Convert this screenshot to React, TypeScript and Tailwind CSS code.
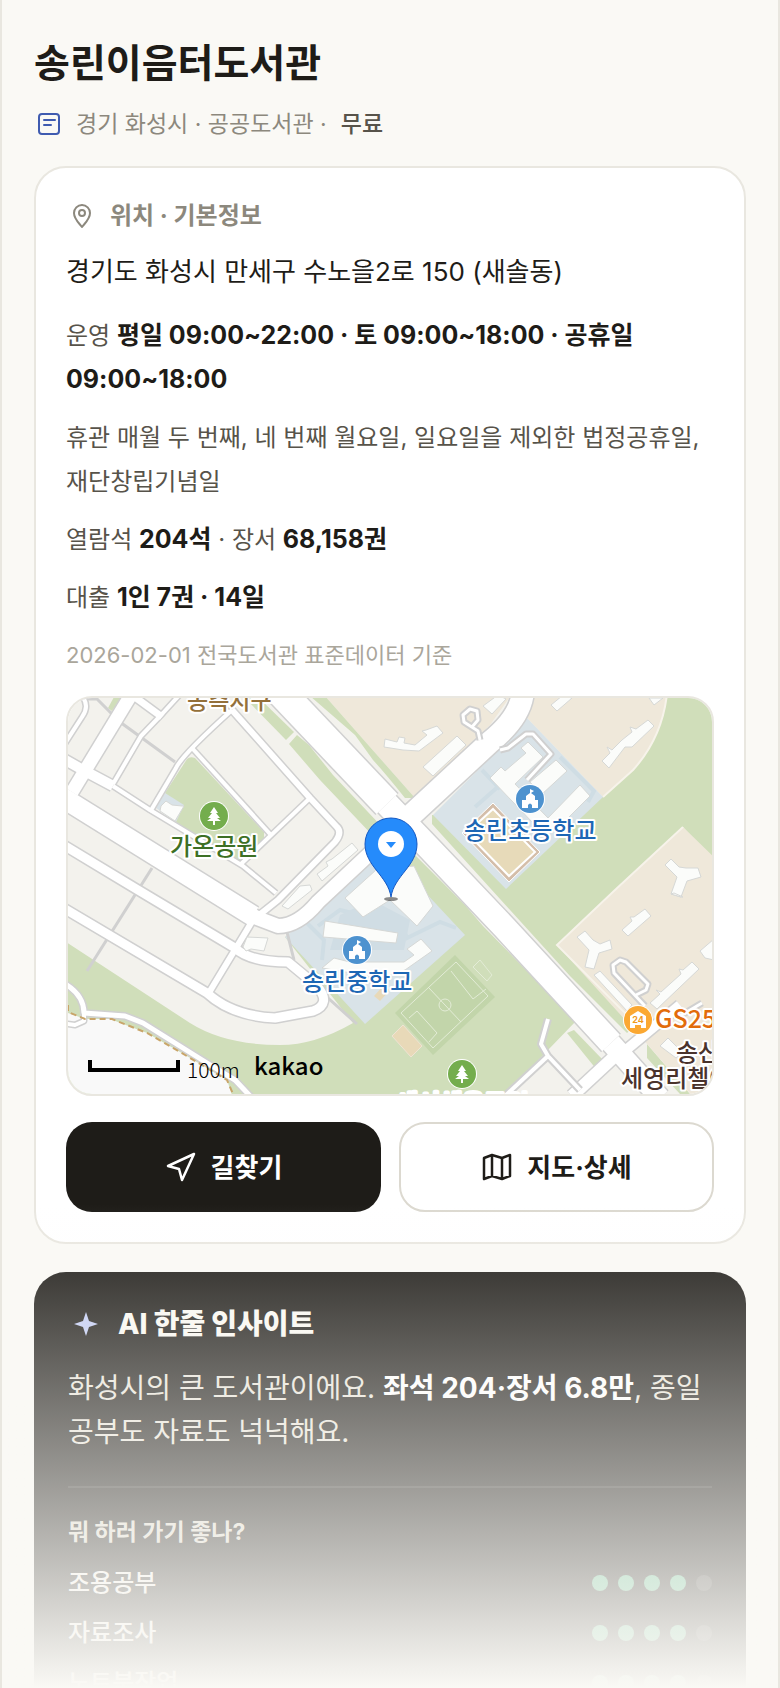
import type { ReactNode } from "react";

type Road = { d: string; w: number };

const roads: Road[] = [
  // boulevard
  { d: "M275 686L387 804", w: 29 },
  { d: "M387 804L431 850L505 928L611 1043", w: 24 },
  { d: "M611 1043L660 1098", w: 20 },
  // cross street
  { d: "M408 818L490 742Q522 716 523 690", w: 22 },
  { d: "M415 812L365 858L318 902Q298 926 278 926L257 918L205 887L60 796", w: 14 },
  { d: "M253 916L60 796", w: 20 },
  { d: "M620 1055L680 1005", w: 10 },
  { d: "M615 1056L572 1096", w: 12 },
  // west grid
  { d: "M60 843L138 890L235 948Q250 962 288 962L317 986Q332 1004 313 1011L275 1018Q232 1016 207 993L60 906", w: 9 },
  { d: "M210 991L253 920L278 900L335 842Q343 832 336 826L310 798L232 710", w: 6 },
  { d: "M60 757L83 770L113 786", w: 10 },
  { d: "M113 786L150 810L243 866L276 893", w: 4 },
  { d: "M72 792L134 690", w: 13 },
  { d: "M113 784L141 736L163 713L184 690", w: 4 },
  { d: "M128 692L162 717", w: 7 },
  { d: "M150 812L176 768Q182 755 232 710", w: 4 },
  { d: "M192 748L270 834", w: 4 },
  { d: "M241 864L310 798", w: 4 },
  { d: "M228 712L210 692", w: 4 },
  { d: "M82 696Q90 706 82 717L62 748", w: 4 },
  // trails
  { d: "M62 982Q84 994 84 1013L125 1016L143 1023L207 1063L235 1080L252 1098", w: 5 },
  { d: "M84 1012L84 1021L75 1025L62 1023", w: 4 },
];

const alleys: Road[] = [
  { d: "M480 740L478 731L464 722L463 715L470 709L477 711L478 720L472 727", w: 3 },
  { d: "M500 750L508 748L526 734L533 734L551 754L527 780", w: 3 },
  { d: "M645 1006L614 973L613 965L620 960L626 962L648 984L646 990L636 995", w: 3 },
  { d: "M548 1019L541 1044L548 1056L580 1090", w: 4 },
  { d: "M548 1056L505 1096", w: 4 },
  { d: "M680 1016L702 1003", w: 3 },
];

const buildings = [
  "385,739 397,742 399,737 405,738 404,743 415,745 427,735 422,731 426,730 437,726 443,733 419,751 403,750 384,747",
  "457,736 466,745 433,776 423,767",
  "483,706 498,695 506,699 492,714",
  "551,705 562,696 572,698 557,711",
  "649,698 663,698 654,705",
  "602,761 610,753 607,747 612,750 622,740 632,732 630,727 636,729 648,720 654,726 632,747 625,747 609,768",
  "490,778 501,767 505,771 526,753 521,748 528,742 543,757 515,784 548,818 580,785 590,796 556,830 534,824",
  "530,782 556,760 567,771 541,795",
  "665,865 671,859 679,867 686,868 698,868 701,877 687,881 681,897 671,894 677,877",
  "674,893 683,897 681,897 671,894",
  "577,937 585,931 593,940 600,944 610,940 612,949 599,953 594,969 585,967 589,950",
  "622,930 632,921 630,917 634,917 645,909 651,916 628,936",
  "700,951 714,939 714,960 705,958",
  "650,1003 660,994 656,990 661,992 681,974 679,969 683,970 692,962 699,969 657,1009",
  "594,975 600,971 632,1005 627,1011",
  "317,874 328,866 326,862 332,859 352,843 358,850 322,881",
  "345,898 376,870 414,866 433,906 417,926 390,900 363,917",
  "325,921 398,933 396,943 323,937",
  "322,968 334,958 350,962 404,962 414,955 407,949 421,939 432,951 405,970 380,978",
  "247,937 268,938 264,951 251,949 246,951 243,947",
  "161,806 166,801 172,805 182,806 184,806 175,821 160,811",
  "282,906 300,886 310,885 312,890 288,909",
  "660,1046 668,1038 678,1048 686,1050 676,1058",
];

function Roads({ items, casing }: { items: Road[]; casing: number }) {
  return (
    <g fill="none" strokeLinejoin="round">
      <g stroke="#d0d0d0">
        {items.map((r) => (
          <path key={r.d} d={r.d} strokeWidth={r.w + casing} />
        ))}
      </g>
      <g stroke="#ffffff">
        {items.map((r) => (
          <path key={r.d} d={r.d} strokeWidth={r.w} />
        ))}
      </g>
    </g>
  );
}

function SchoolPin({ x, y }: { x: number; y: number }) {
  return (
    <g transform={`translate(${x} ${y})`}>
      <circle r="15" fill="#fff" />
      <circle r="14" fill="#4d92cf" />
      <path d="M-8 9V1H-4V-3L0 -6V-10L4 -8L1 -6L5 -3V1H8V9H2V6Q0 3 -2 6V9Z" fill="#fff" />
    </g>
  );
}

function TreePin({ x, y }: { x: number; y: number }) {
  return (
    <g transform={`translate(${x} ${y})`}>
      <circle r="15" fill="#fff" />
      <circle r="14" fill="#74ad4d" />
      <path d="M0 -9L4 -3H2L6 2H3L7 5H1V9H-1V5H-7L-3 2H-6L-2 -3H-4Z" fill="#fff" />
    </g>
  );
}

function MapLabel({ x, y, className, children }: { x: number; y: number; className: string; children: ReactNode }) {
  return (
    <text
      x={x}
      y={y}
      stroke="#fff"
      strokeWidth="4"
      strokeLinejoin="round"
      paintOrder="stroke"
      className={`font-['Noto_Sans_CJK_KR',sans-serif] font-medium ${className}`}
    >
      {children}
    </text>
  );
}

function AreaMap() {
  return (
    <svg viewBox="68 698 644 396" preserveAspectRatio="xMidYMid slice" className="block h-full w-full" role="img" aria-label="도서관 위치 지도">
      <rect x="0" y="600" width="800" height="600" fill="#f3f2ed" />

      {/* parks and verges */}
      <g fill="#d0deba">
        <path d="M60 938L190 1023Q225 1045 280 1045Q315 1045 353 1023L285 937L410 850L465 905L483 926L576 1021L548 1050L503 1098L60 1098Z" />
        <path d="M243 696H257L294 732L286 740Z" />
        <path d="M289 744L297 735L309 745L333 775L385 830L375 838L320 780Z" />
        <path d="M603 797L633 770Q662 738 667 694H720V870L683 827L615 890L557 945L636 1024L627 1033L570 976L432 824V815H436Z" />
        <path d="M187 759Q190 756 195 758L264 832V838L240 860H232L176 822L165 793Z" />
        <path d="M567 1033L574 1030L603 1060V1070L597 1070Z" />
        <path d="M647 1044L690 1094H680L647 1058Z" />
        <path d="M108 708L114 697H122L112 711Z" />
      </g>

      {/* ground outside the trail */}
      <path d="M60 1010L85 1019H110L147 1033L180 1052L227 1080L233 1098H60Z" fill="#f9f9f9" />

      {/* apartment blocks */}
      <g fill="#efe8da">
        <path d="M325 696L415 798L490 725L512 694Z" />
        <path d="M533 694L527 718L603 797L633 770Q662 738 667 694Z" />
        <path d="M683 827L720 863V1098H694L648 1045L557 945L615 890Z" />
      </g>
      <path d="M603 797L633 770Q662 738 667 694M683 827L615 890L557 945L636 1024" fill="none" stroke="#f7f3ea" strokeWidth="2" />
      <path d="M310 696H325L415 798H405Q385 773 373 760L355 735Z" fill="#d0deba" />

      {/* school grounds */}
      <g fill="#d9e3e8">
        <path d="M527 718L603 797L506 889L433 815L500 748Z" />
        <path d="M285 937L308 918L332 900L372 858L395 860L465 935L365 1024Z" />
        <path d="M165 793L184 805L176 822L156 808Z" />
      </g>
      <g fill="none" stroke="#cfdde4" strokeWidth="4">
        <path d="M475 807L500 785M482 770L500 789M560 757L594 791L588 802" />
        <path d="M318 926L340 910L372 918M404 930L407 938L440 922L456 928M306 922L324 940L322 960" />
      </g>
      <path d="M340 915L372 900L410 920L404 950L330 950Z" fill="#d0dde4" />

      <g fill="none" stroke="#d0d0d0" strokeWidth="3">
        <path d="M84 699H97L120 722L175 762" />
        <path d="M152 868L87 971" />
        <path d="M287 932L294 960M328 998L357 1024" />
      </g>

      <Roads items={roads} casing={3} />
      <Roads items={alleys} casing={4} />

      <path d="M68 1005V1012L85 1019H112L147 1033L180 1052L227 1080L234 1096" fill="none" stroke="#c9a56a" strokeWidth="2" strokeDasharray="6 4" />

      {/* playgrounds */}
      <path d="M493 803L540 852L509 882L462 833Z" fill="#d4beaa" stroke="#fff" strokeWidth="1" />
      <path d="M493 809L535 852L509 876L467 833Z" fill="#e7dab9" stroke="#fff" strokeWidth="2" />
      <path d="M455 955L495 997L433 1055L395 1013Z" fill="#c2d5aa" />
      <g fill="none" stroke="#e3ecd6" strokeWidth="1">
        <path d="M456 962L488 996L433 1048L401 1013Z" />
        <path d="M429 988L461 1022M451 971L473 999L486 989M409 1018L417 1011L437 1033L429 1042" />
        <circle cx="445" cy="1005" r="6" />
        <path d="M480 960L492 975L487 981L473 967Z" />
      </g>
      <path d="M403 1025L422 1046L411 1057L392 1036Z" fill="#e8d9b8" stroke="#efe3d3" strokeWidth="1" />
      <path d="M384 985L390 990L380 1001L374 996Z" fill="#e8d9b8" />

      <g fill="#fbfcfa" stroke="#d6d8d6" strokeWidth="1">
        {buildings.map((points) => (
          <polygon key={points} points={points} />
        ))}
      </g>

      <SchoolPin x={530} y={799} />
      <SchoolPin x={357} y={950} />
      <TreePin x={214} y={816} />
      <TreePin x={462} y={1074} />
      <circle cx="638" cy="1020" r="15" fill="#fff" />
      <circle cx="638" cy="1020" r="14" fill="#fba832" />
      <path d="M630 1016L638 1011L646 1016V1028H641V1025H635V1028H630Z" fill="#fff" />
      <text x="638" y="1023" textAnchor="middle" className="fill-[#f09a1c] font-['Inter',sans-serif] text-[9px] font-bold">24</text>

      <MapLabel x={187} y={709} className="fill-[#94703a] text-[23px]">동측지구</MapLabel>
      <MapLabel x={170} y={855} className="fill-[#3d7024] text-[24px]">가온공원</MapLabel>
      <MapLabel x={464} y={839} className="fill-[#1d67b5] text-[24px]">송린초등학교</MapLabel>
      <MapLabel x={302} y={990} className="fill-[#1d67b5] text-[24px]">송린중학교</MapLabel>
      <MapLabel x={655} y={1028} className="fill-[#e26c0c] text-[25px]">GS25</MapLabel>
      <MapLabel x={676} y={1061} className="fill-[#4a332c] text-[24px]">송산</MapLabel>
      <MapLabel x={621} y={1087} className="fill-[#4a332c] text-[24px]">세영리첼아</MapLabel>
      <MapLabel x={396} y={1112} className="fill-white text-[24px]">새서체육공원</MapLabel>

      {/* scale bar */}
      <path d="M90 1060V1070H178V1060" fill="none" stroke="#000" strokeWidth="4" />
      <text x="187" y="1078" className="font-['Noto_Sans_CJK_KR',sans-serif] text-[21px] font-light">100m</text>
      <text x="254" y="1075" className="font-['Noto_Sans_CJK_KR',sans-serif] text-[24px] font-medium">kakao</text>

      {/* library marker */}
      <ellipse cx="391" cy="899" rx="7" ry="2" fill="#000" opacity="0.45" />
      <path d="M391 897C388 876 365 866 365 844A26 26 0 0 1 417 844C417 866 394 876 391 897Z" fill="#258bfb" stroke="#1459c4" strokeWidth="1" />
      <circle cx="391" cy="844" r="13" fill="#fff" />
      <path d="M386 842H396L391 848Z" fill="#258bfb" />
    </svg>
  );
}

function Strong({ children }: { children: ReactNode }) {
  return <strong className="text-[25px] leading-none font-bold text-[#1e1c18]">{children}</strong>;
}

function Rating({ label, score }: { label: string; score: number }) {
  return (
    <li className="flex h-[50px] items-center justify-between">
      <span className="text-[24px] font-medium text-[#f5f3ee]">{label}</span>
      <span className="flex gap-[10px]" role="img" aria-label={`${score} / 5`}>
        {[1, 2, 3, 4, 5].map((n) => (
          <span key={n} className={n <= score ? "size-4 rounded-full bg-[#5cb88a]" : "size-4 rounded-full bg-white/15"} />
        ))}
      </span>
    </li>
  );
}

export default function App() {
  return (
    <main className="relative h-screen overflow-hidden border-x-2 border-[#e9e7e0] bg-[#faf9f5] px-8 pt-9 font-['Inter','Noto_Sans_CJK_KR',sans-serif] break-keep text-[#1e1c18]">
      <h1 className="text-[39px] leading-[54px] font-bold">송린이음터도서관</h1>
      <p className="mt-4 flex h-9 items-center text-[23px] text-[#8c887d]">
        <svg className="ml-0.5 mr-[14px] size-[26px]" viewBox="0 0 26 26" fill="none" stroke="#3f5bb0" strokeWidth="2" strokeLinecap="round">
          <rect x="3" y="3" width="20" height="20" rx="3" />
          <path d="M8 9H19M8 14H15" />
        </svg>
        경기 화성시 · 공공도서관 ·
        <span className="ml-[14px] font-medium text-[#57534a]">무료</span>
      </p>

      <section className="mt-6 rounded-[32px] border-2 border-[#e9e7e0] bg-white p-[30px]">
        <h2 className="flex h-9 items-center text-[24px] font-bold text-[#8c887d]">
          <svg className="ml-1 mr-4 size-6" viewBox="0 0 24 24" fill="none" stroke="currentColor" strokeWidth="2">
            <path d="M12 23C9 19 4 15 4 9A8 8 0 0 1 20 9C20 15 15 19 12 23Z" strokeLinejoin="round" />
            <circle cx="12" cy="9" r="3" />
          </svg>
          위치 · 기본정보
        </h2>
        <p className="mt-4 text-[26px] leading-[44px]">경기도 화성시 만세구 수노을2로 150 (새솔동)</p>
        <div className="mt-5 space-y-[14px] text-[24px] leading-[44px] text-[#57534a]">
          <p>
            운영 <Strong>평일 09:00~22:00 · 토 09:00~18:00 · 공휴일 09:00~18:00</Strong>
          </p>
          <p>휴관 매월 두 번째, 네 번째 월요일, 일요일을 제외한 법정공휴일, 재단창립기념일</p>
          <p>
            열람석 <Strong>204석</Strong> · 장서 <Strong>68,158권</Strong>
          </p>
          <p>
            대출 <Strong>1인 7권 · 14일</Strong>
          </p>
          <p className="text-[22px] leading-[42px] text-[#aaa69b]">2026-02-01 전국도서관 표준데이터 기준</p>
        </div>
        <div className="mt-5 h-[400px] overflow-hidden rounded-[26px] border-2 border-[#e9e7e0]">
          <AreaMap />
        </div>
        <div className="mt-[26px] grid grid-cols-2 gap-[18px] text-[26px] font-bold">
          <button className="flex h-[90px] items-center justify-center gap-[14px] rounded-[26px] bg-[#1e1c18] text-white">
            <svg className="size-8" viewBox="0 0 32 32" fill="none" stroke="currentColor" strokeWidth="2.500" strokeLinejoin="round">
              <path d="M29 3L3 15L14 18L17 29Z" />
            </svg>
            길찾기
          </button>
          <button className="flex h-[90px] items-center justify-center gap-[14px] rounded-[26px] border-2 border-[#dcd9d0] bg-white">
            <svg className="size-8" viewBox="0 0 32 32" fill="none" stroke="currentColor" strokeWidth="2.500" strokeLinejoin="round">
              <path d="M3 7L11 4L21 7L29 4V25L21 28L11 25L3 28ZM11 4V25M21 7V28" />
            </svg>
            지도·상세
          </button>
        </div>
      </section>

      <section className="mt-7 rounded-[32px] bg-[#1e1c18] px-[34px] pt-8 pb-10">
        <h2 className="flex h-10 items-center text-[28px] font-extrabold text-[#faf8f2]">
          <svg className="ml-1 mr-[18px] size-7" viewBox="0 0 28 28" fill="#c3cdf5">
            <path d="M14 2L17 11L26 14L17 17L14 26L11 17L2 14L11 11Z" />
          </svg>
          AI 한줄 인사이트
        </h2>
        <p className="mt-[22px] text-[28px] leading-[44px] text-[#e8e4da]">
          화성시의 큰 도서관이에요. <strong className="font-bold text-white">좌석 204·장서 6.8만</strong>, 종일 공부도 자료도 넉넉해요.
        </p>
        <div className="mt-8 border-t-2 border-white/10 pt-[26px]">
          <h3 className="mb-2 text-[23px] leading-[36px] font-bold text-[#dcd8cc]">뭐 하러 가기 좋나?</h3>
          <ul>
            <Rating label="조용공부" score={4} />
            <Rating label="자료조사" score={4} />
            <Rating label="노트북작업" score={4} />
          </ul>
        </div>
      </section>

      <div className="pointer-events-none absolute -inset-x-0.5 bottom-0 h-[484px] bg-linear-to-b from-[#faf9f5]/0 to-[#faf9f5]" />
    </main>
  );
}
